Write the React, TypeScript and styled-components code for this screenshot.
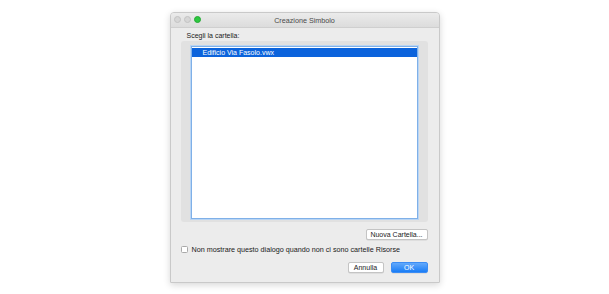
import React, { useState } from "react";
import styled, { createGlobalStyle } from "styled-components";

const GlobalStyle = createGlobalStyle`
  html, body {
    margin: 0;
    padding: 0;
    background: #ffffff;
    font-family: "Liberation Sans", Arial, sans-serif;
  }
`;

const Page = styled.div`
  width: 609px;
  height: 294px;
  padding-top: 12px;
  box-sizing: border-box;
`;

const Window = styled.div`
  width: 270px;
  height: 271px;
  margin: 0 auto;
  box-sizing: border-box;
  background: #ececec;
  border: 1px solid #c9c9c9;
  border-radius: 4px 4px 1px 1px;
  box-shadow: 0 2px 7px rgba(0, 0, 0, 0.16);
  display: flex;
  flex-direction: column;
  overflow: hidden;
`;

const TitleBar = styled.div`
  height: 14px;
  flex: none;
  position: relative;
  display: flex;
  align-items: center;
  justify-content: center;
  background: linear-gradient(#ebebeb, #dcdcdc);
  border-bottom: 1px solid #cfcfcf;
`;

const Lights = styled.div`
  position: absolute;
  left: 3px;
  top: 3px;
  display: flex;
  gap: 3px;
`;

const Light = styled.span<{ $color: string; $border: string }>`
  width: 7px;
  height: 7px;
  border-radius: 50%;
  box-sizing: border-box;
  background: ${(p) => p.$color};
  border: 0.5px solid ${(p) => p.$border};
`;

const Title = styled.div`
  font-size: 7.2px;
  color: #4a4a4a;
`;

const Body = styled.div`
  flex: 1;
  display: flex;
  flex-direction: column;
  padding: 4px 11px 0 10px;
`;

const Label = styled.div`
  font-size: 7px;
  color: #1a1a1a;
  margin-left: 6px;
  height: 8px;
  line-height: 8px;
`;

const GroupBox = styled.div`
  margin-top: 1px;
  height: 181px;
  box-sizing: border-box;
  background: #e1e1e1;
  border-radius: 3px;
  padding: 5px 10px 3px 10px;
  display: flex;
`;

const List = styled.div`
  flex: 1;
  background: #ffffff;
  border: 1px solid #7fb0e8;
  box-shadow: 0 0 0 1px #b9d5f4;
  padding-top: 1px;
`;

const Row = styled.div<{ $selected?: boolean }>`
  height: 9px;
  line-height: 9px;
  font-size: 7px;
  padding-left: 11px;
  color: ${(p) => (p.$selected ? "#ffffff" : "#1e1e1e")};
  background: ${(p) => (p.$selected ? "#0b63dc" : "transparent")};
`;

const ButtonRow = styled.div<{ $top: number; $gap?: number }>`
  display: flex;
  justify-content: flex-end;
  gap: ${(p) => p.$gap ?? 0}px;
  margin-top: ${(p) => p.$top}px;
`;

const Button = styled.button<{ $width: number; $primary?: boolean }>`
  width: ${(p) => p.$width}px;
  height: 11px;
  padding: 0;
  font-family: "Liberation Sans", Arial, sans-serif;
  font-size: 7px;
  line-height: 9px;
  border-radius: 2px;
  cursor: pointer;
  color: ${(p) => (p.$primary ? "#ffffff" : "#1a1a1a")};
  background: ${(p) =>
    p.$primary ? "linear-gradient(#63a9fb, #1a7df6)" : "#ffffff"};
  border: 0.5px solid ${(p) => (p.$primary ? "#3b8cf4" : "#c4c4c4")};
  box-shadow: 0 0.5px 0.5px rgba(0, 0, 0, 0.12);
`;

const CheckRow = styled.label`
  display: flex;
  align-items: center;
  gap: 4px;
  margin-top: 5px;
  font-size: 7.2px;
  color: #1a1a1a;
  height: 8px;
`;

const Box = styled.span<{ $checked: boolean }>`
  width: 7px;
  height: 7px;
  box-sizing: border-box;
  border: 0.5px solid #a9a9a9;
  border-radius: 1.5px;
  background: ${(p) => (p.$checked ? "#1a7df6" : "#ffffff")};
`;

const App: React.FC = () => {
  const [checked, setChecked] = useState(false);

  return (
    <Page>
      <GlobalStyle />
      <Window>
        <TitleBar>
          <Lights>
            <Light $color="#d6d6d6" $border="#c2c2c2" />
            <Light $color="#d6d6d6" $border="#c2c2c2" />
            <Light $color="#2dc840" $border="#25a834" />
          </Lights>
          <Title>Creazione Simbolo</Title>
        </TitleBar>
        <Body>
          <Label>Scegli la cartella:</Label>
          <GroupBox>
            <List>
              <Row $selected>Edificio Via Fasolo.vwx</Row>
            </List>
          </GroupBox>
          <ButtonRow $top={7}>
            <Button $width={62}>Nuova Cartella...</Button>
          </ButtonRow>
          <CheckRow onClick={() => setChecked((c) => !c)}>
            <Box $checked={checked} />
            Non mostrare questo dialogo quando non ci sono cartelle Risorse
          </CheckRow>
          <ButtonRow $top={9} $gap={7}>
            <Button $width={36}>Annulla</Button>
            <Button $width={37} $primary>
              OK
            </Button>
          </ButtonRow>
        </Body>
      </Window>
    </Page>
  );
};

export default App;
